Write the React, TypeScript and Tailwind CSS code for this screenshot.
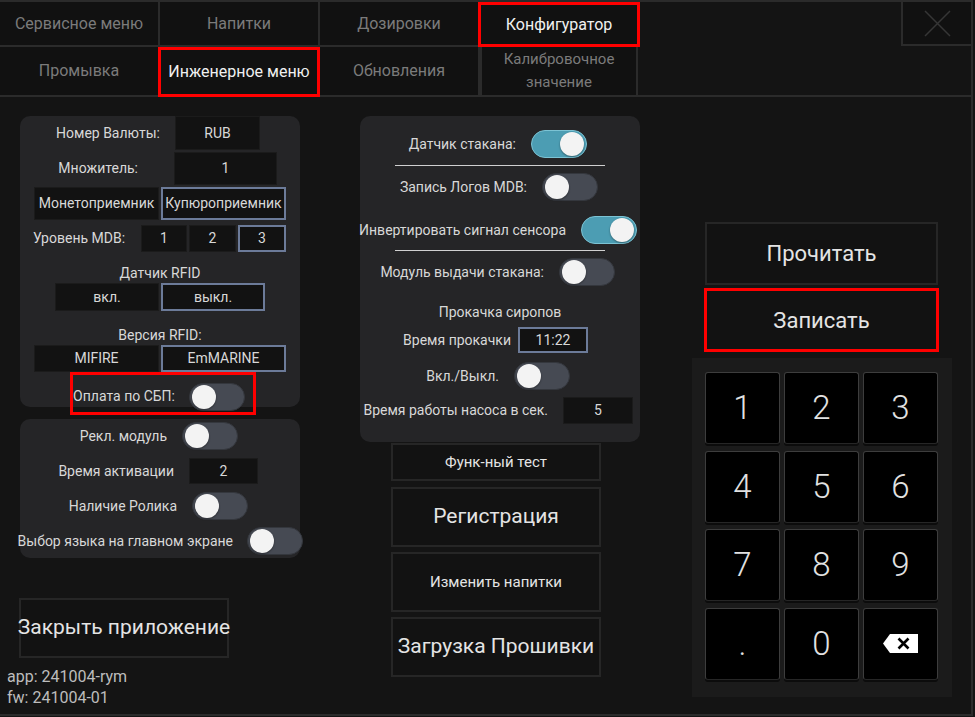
import type { ReactNode } from 'react';

function Toggle({ on = false }: { on?: boolean }) {
  return (
    <div
      className={`flex h-[28px] w-[56px] shrink-0 items-center rounded-full border px-[2px] ${
        on ? 'justify-end border-[#7cc3d4] bg-[#4c9db3]' : 'border-[#34373d] bg-[#464a53]'
      }`}
    >
      <div className="h-[24px] w-[24px] rounded-full bg-[#f3f3f3] shadow-[0_1px_2px_rgba(0,0,0,0.4)]" />
    </div>
  );
}

function Cell({ children, className = '', sel = false }: { children: ReactNode; className?: string; sel?: boolean }) {
  return (
    <div
      className={`flex shrink-0 items-center justify-center whitespace-nowrap bg-[#121212] ${
        sel ? 'border-2 border-[#6c7b99]' : 'border border-[#1b1b1b]'
      } ${className}`}
    >
      {children}
    </div>
  );
}

function Label({ children, className = '' }: { children: ReactNode; className?: string }) {
  return <div className={`flex shrink-0 justify-end whitespace-nowrap ${className}`}>{children}</div>;
}

function BigButton({ children, className = '' }: { children: ReactNode; className?: string }) {
  return (
    <div className={`flex items-center justify-center whitespace-nowrap border-2 border-[#262626] bg-[#121212] text-[#e4e4e4] ${className}`}>
      {children}
    </div>
  );
}

function Tab({ children, active = false, className = '' }: { children: ReactNode; active?: boolean; className?: string }) {
  return (
    <div
      className={`flex shrink-0 items-center justify-center text-center ${
        active ? 'border-[3px] border-[#ff0000] text-[#f0f0f0]' : 'border-r-2 border-b-2 border-[#2b2b2b] text-[#7b7b7b]'
      } bg-[#111111] ${className}`}
    >
      {children}
    </div>
  );
}

function Key({ children }: { children: ReactNode }) {
  return (
    <div className="flex h-[72px] items-center justify-center rounded-[3px] border border-[#3d3d3d] border-b-[#262626] bg-black text-[33px] font-light text-[#e2e2e2] shadow-[0_2px_0_#0c0c0c]">
      {children}
    </div>
  );
}

function Backspace() {
  return (
    <svg width="35" height="19" viewBox="0 0 35 19">
      <polygon points="0,9.5 7,0 35,0 35,19 7,19" fill="#ffffff" />
      <path d="M15.5 4.5 L25.5 14.5 M25.5 4.5 L15.5 14.5" stroke="#000" strokeWidth="2.6" />
    </svg>
  );
}

export default function App() {
  const keys = ['1', '2', '3', '4', '5', '6', '7', '8', '9', '.', '0'];

  return (
    <div className="h-[717px] w-[975px] overflow-hidden bg-[#141414] font-[Roboto,sans-serif]">
      <div className="h-[716px] w-[973px] border-t-2 border-r-2 border-b-2 border-[#2b2b2b]">
        {/* Tabs row 1 */}
        <div className="flex h-[45px] text-[16px]">
          <Tab className="h-[45px] w-[160px]">Сервисное меню</Tab>
          <Tab className="h-[45px] w-[160px]">Напитки</Tab>
          <Tab className="h-[45px] w-[160px]">Дозировки</Tab>
          <Tab active className="-ml-[2px] h-[45px] w-[162px]">Конфигуратор</Tab>
          <div className="ml-auto flex h-[44px] w-[70px] items-center justify-center border-b-2 border-l-2 border-[#2b2b2b] bg-[#111111]">
            <svg width="27" height="27" viewBox="0 0 27 27">
              <path d="M1 1 L26 26 M26 1 L1 26" stroke="#363636" strokeWidth="1.5" />
            </svg>
          </div>
        </div>

        {/* Tabs row 2 */}
        <div className="flex h-[50px] text-[16px]">
          <Tab className="h-[50px] w-[160px]">Промывка</Tab>
          <Tab active className="-ml-[2px] h-[50px] w-[162px]">Инженерное меню</Tab>
          <Tab className="h-[50px] w-[160px]">Обновления</Tab>
          <Tab className="h-[50px] w-[158px] border-l-2 text-[15px] leading-[23px]">
            Калибровочное
            <br />
            значение
          </Tab>
          <div className="h-[50px] flex-1 border-b-2 border-[#2b2b2b]" />
        </div>

        {/* Body */}
        <div className="flex text-[14px] text-[#d8d8d8]">
          {/* Left column */}
          <div className="w-[360px] shrink-0 pt-[19px]">
            <div className="ml-[20px] h-[291px] w-[280px] rounded-[10px] bg-[#252527]">
              <div className="flex h-[34px] items-center">
                <Label className="w-[140px]">Номер Валюты:</Label>
                <Cell className="ml-[15px] h-[34px] w-[85px]">RUB</Cell>
              </div>
              <div className="mt-[2px] flex h-[33px] items-center">
                <Label className="w-[118px]">Множитель:</Label>
                <Cell className="ml-[36px] h-[33px] w-[103px]">1</Cell>
              </div>
              <div className="mt-[2px] flex h-[33px] gap-[2px] pl-[14px]">
                <Cell className="h-[33px] w-[125px]">Монетоприемник</Cell>
                <Cell sel className="h-[33px] w-[125px]">Купюроприемник</Cell>
              </div>
              <div className="mt-[5px] flex h-[27px] items-center pl-[13px]">
                <div className="w-[108px] whitespace-nowrap">Уровень MDB:</div>
                <div className="flex gap-[2px]">
                  <Cell className="h-[27px] w-[46px]">1</Cell>
                  <Cell className="h-[27px] w-[47px]">2</Cell>
                  <Cell sel className="h-[27px] w-[48px]">3</Cell>
                </div>
              </div>
              <div className="mt-[11px] h-[20px] text-center leading-[20px]">Датчик RFID</div>
              <div className="flex h-[28px] gap-[2px] pl-[35px]">
                <Cell className="h-[28px] w-[104px]">вкл.</Cell>
                <Cell sel className="h-[28px] w-[104px]">выкл.</Cell>
              </div>
              <div className="mt-[14px] h-[20px] text-center leading-[20px]">Версия RFID:</div>
              <div className="flex h-[27px] gap-[2px] pl-[14px]">
                <Cell className="h-[27px] w-[125px]">MIFIRE</Cell>
                <Cell sel className="h-[27px] w-[125px]">EmMARINE</Cell>
              </div>
              <div className="ml-[50px] flex h-[43px] w-[186px] items-center border-[3px] border-[#ff0000] pt-[6px]">
                <Label className="w-[102px]">Оплата по СБП:</Label>
                <div className="ml-[14px]">
                  <Toggle />
                </div>
              </div>
            </div>

            <div className="ml-[20px] mt-[12px] h-[139px] w-[280px] rounded-[10px] bg-[#252527] pt-[3px]">
              <div className="flex h-[28px] items-center">
                <Label className="w-[147px]">Рекл. модуль</Label>
                <div className="ml-[15px]">
                  <Toggle />
                </div>
              </div>
              <div className="mt-[8px] flex h-[26px] items-center">
                <Label className="w-[154px]">Время активации</Label>
                <Cell className="ml-[15px] h-[26px] w-[69px]">2</Cell>
              </div>
              <div className="mt-[8px] flex h-[28px] items-center">
                <Label className="w-[157px]">Наличие Ролика</Label>
                <div className="ml-[15px]">
                  <Toggle />
                </div>
              </div>
              <div className="mt-[7px] flex h-[28px] items-center">
                <Label className="w-[213px]">Выбор языка на главном экране</Label>
                <div className="ml-[14px]">
                  <Toggle />
                </div>
              </div>
            </div>

            <BigButton className="ml-[19px] mt-[40px] h-[60px] w-[210px] text-[21px]">Закрыть приложение</BigButton>

            <div className="ml-[7px] mt-[8px] text-[16px] leading-[21px] text-[#bdbdbd]">
              <div>app: 241004-rym</div>
              <div>fw: 241004-01</div>
            </div>
          </div>

          {/* Middle column */}
          <div className="w-[280px] shrink-0 pt-[19px]">
            <div className="h-[326px] w-[280px] rounded-[10px] bg-[#252527] pt-[14px]">
              <div className="flex h-[28px] items-center">
                <Label className="w-[156px]">Датчик стакана:</Label>
                <div className="ml-[15px]">
                  <Toggle on />
                </div>
              </div>
              <div className="ml-[35px] mt-[7px] h-px w-[210px] bg-[#d0d0d0]" />
              <div className="mt-[7px] flex h-[28px] items-center">
                <Label className="w-[167px]">Запись Логов MDB:</Label>
                <div className="ml-[15px]">
                  <Toggle />
                </div>
              </div>
              <div className="mt-[15px] flex h-[28px] items-center">
                <Label className="w-[206px]">Инвертировать сигнал сенсора</Label>
                <div className="ml-[15px]">
                  <Toggle on />
                </div>
              </div>
              <div className="ml-[35px] mt-[6px] h-px w-[210px] bg-[#d0d0d0]" />
              <div className="mt-[7px] flex h-[28px] items-center">
                <Label className="w-[184px]">Модуль выдачи стакана:</Label>
                <div className="ml-[15px]">
                  <Toggle />
                </div>
              </div>
              <div className="mt-[16px] h-[20px] text-center leading-[20px]">Прокачка сиропов</div>
              <div className="mt-[5px] flex h-[26px] items-center">
                <Label className="w-[151px]">Время прокачки</Label>
                <Cell sel className="ml-[7px] h-[26px] w-[70px]">11:22</Cell>
              </div>
              <div className="mt-[9px] flex h-[28px] items-center">
                <Label className="w-[139px]">Вкл./Выкл.</Label>
                <div className="ml-[15px]">
                  <Toggle />
                </div>
              </div>
              <div className="mt-[7px] flex h-[27px] items-center">
                <Label className="w-[188px]">Время работы насоса в сек.</Label>
                <Cell className="ml-[15px] h-[27px] w-[70px]">5</Cell>
              </div>
            </div>

            <div className="ml-[31px] w-[210px]">
              <BigButton className="mt-[1px] h-[38px] text-[15px]">Функ-ный тест</BigButton>
              <BigButton className="mt-[6px] h-[60px] text-[21px]">Регистрация</BigButton>
              <BigButton className="mt-[5px] h-[60px] text-[15px]">Изменить напитки</BigButton>
              <BigButton className="mt-[5px] h-[60px] text-[21px]">Загрузка Прошивки</BigButton>
            </div>
          </div>

          {/* Right column */}
          <div className="ml-[52px] w-[260px] shrink-0 pt-[125px]">
            <BigButton className="ml-[13px] h-[63px] w-[233px] text-[22px]">Прочитать</BigButton>
            <div className="ml-[12px] mt-[3px] flex h-[64px] w-[235px] items-center justify-center border-[3px] border-[#ff0000] bg-[#121212] text-[22px] text-[#e4e4e4]">
              Записать
            </div>
            <div className="mt-[6px] h-[339px] w-[260px] bg-[#1b1b1b] pl-[13px] pt-[14px]">
              <div className="grid w-[233px] grid-cols-3 gap-x-[4px] gap-y-[6.5px]">
                {keys.map(k => (
                  <Key key={k}>{k}</Key>
                ))}
                <Key>
                  <Backspace />
                </Key>
              </div>
            </div>
          </div>
        </div>
      </div>
    </div>
  );
}
